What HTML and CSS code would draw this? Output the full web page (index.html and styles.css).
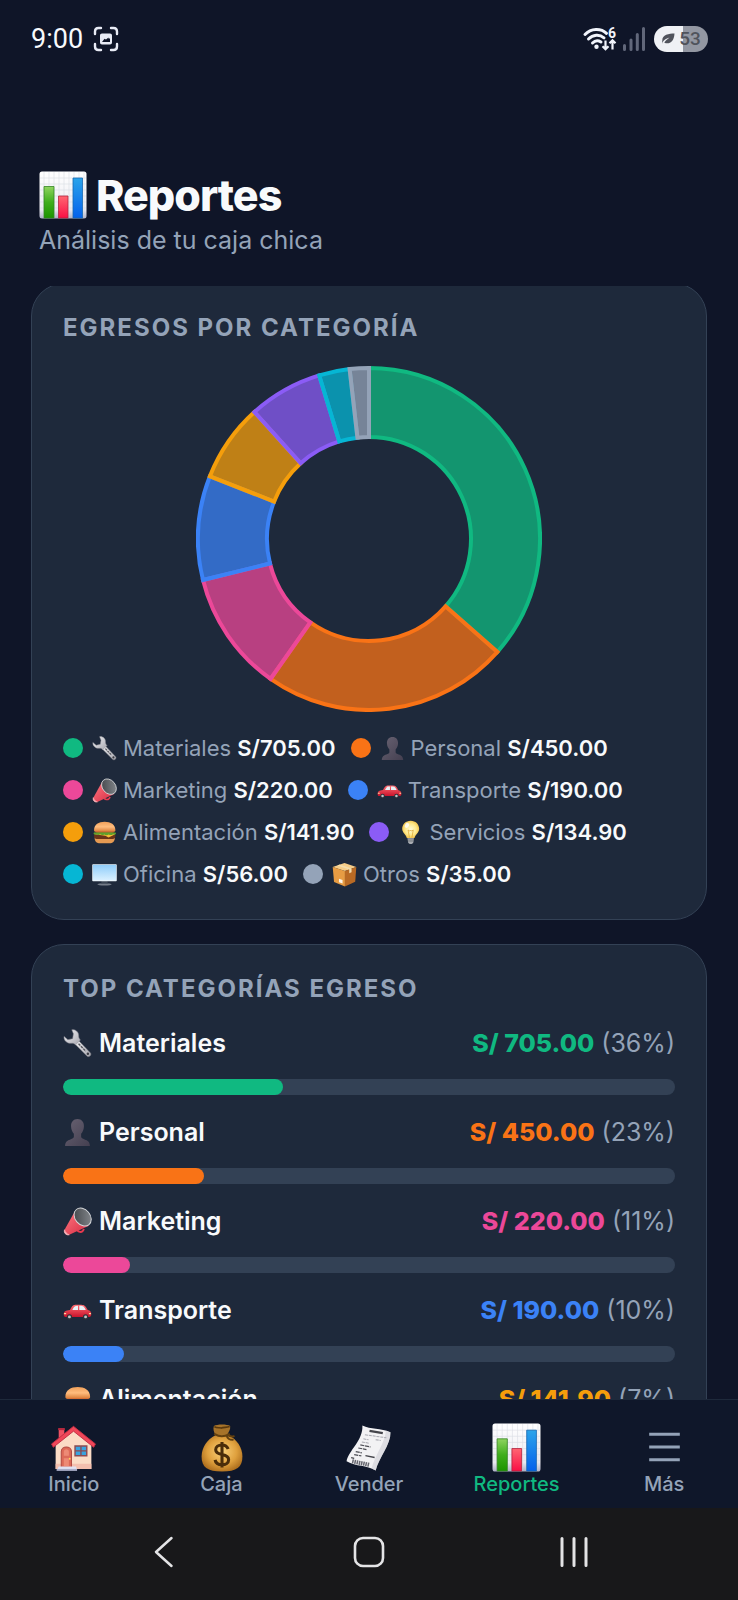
FILE: index.html
```html
<!DOCTYPE html>
<html lang="es">
<head>
<meta charset="utf-8">
<meta name="viewport" content="width=device-width, initial-scale=1">
<title>Reportes</title>
<link rel="stylesheet" href="styles.css">
</head>
<body>
<svg class="sprite" aria-hidden="true">
  <defs>
    <linearGradient id="g-green" x1="0" y1="0" x2="0" y2="1"><stop offset="0" stop-color="#8fd45f"/><stop offset=".5" stop-color="#3fae1c"/><stop offset="1" stop-color="#1c9400"/></linearGradient>
    <linearGradient id="g-red" x1="0" y1="0" x2="0" y2="1"><stop offset="0" stop-color="#ff6672"/><stop offset="1" stop-color="#f90f45"/></linearGradient>
    <linearGradient id="g-blue" x1="0" y1="0" x2="0" y2="1"><stop offset="0" stop-color="#2ba4ea"/><stop offset="1" stop-color="#0461ec"/></linearGradient>
    <linearGradient id="g-paper" x1="0" y1="0" x2="0" y2="1"><stop offset="0" stop-color="#fff"/><stop offset=".8" stop-color="#ececf2"/><stop offset="1" stop-color="#aeb0c6"/></linearGradient>
    <linearGradient id="g-metal" x1="0" y1="0" x2="1" y2="1"><stop offset="0" stop-color="#f2f2f4"/><stop offset=".6" stop-color="#c6c6cc"/><stop offset="1" stop-color="#a3a3ab"/></linearGradient>
    <linearGradient id="g-bust" x1="0" y1="0" x2="1" y2="1"><stop offset="0" stop-color="#686272"/><stop offset="1" stop-color="#443f50"/></linearGradient>
    <linearGradient id="g-horn" x1="0" y1="0" x2="1" y2="1"><stop offset="0" stop-color="#ff7780"/><stop offset="1" stop-color="#d52a42"/></linearGradient>
    <linearGradient id="g-mouth" x1="0" y1="0" x2="1" y2="1"><stop offset="0" stop-color="#3d4044"/><stop offset="1" stop-color="#8b8f94"/></linearGradient>
    <linearGradient id="g-car" x1="0" y1="0" x2="0" y2="1"><stop offset="0" stop-color="#ff6d73"/><stop offset="1" stop-color="#c9142c"/></linearGradient>
    <linearGradient id="g-bun" x1="0" y1="0" x2="0" y2="1"><stop offset="0" stop-color="#f0a05a"/><stop offset=".5" stop-color="#ffbd7e"/><stop offset="1" stop-color="#d97c35"/></linearGradient>
    <linearGradient id="g-screen" x1="0" y1="0" x2="0" y2="1"><stop offset="0" stop-color="#8fcdfa"/><stop offset="1" stop-color="#d9f0ff"/></linearGradient>
    <radialGradient id="g-bulb" cx=".5" cy=".5" r=".55"><stop offset="0" stop-color="#fffbd8"/><stop offset=".6" stop-color="#ffe98a"/><stop offset="1" stop-color="#f2bf45"/></radialGradient>
    <radialGradient id="g-bag" cx=".5" cy=".45" r=".6"><stop offset="0" stop-color="#fbd27a"/><stop offset=".6" stop-color="#dfa03d"/><stop offset="1" stop-color="#a96a1b"/></radialGradient>
  </defs>

  <symbol id="i-chart" viewBox="0 0 48 48">
    <rect x=".5" y=".5" width="47" height="47" rx="2.5" fill="url(#g-paper)"/>
    <path d="M5 1v46M10 1v46M15 1v46M20 1v46M25 1v46M30 1v46M35 1v46M40 1v46M45 1v46M1 7h46M1 13h46M1 19h46M1 25h46M1 31h46M1 37h46" stroke="#cfd3dc" stroke-width=".6" opacity=".7"/>
    <path d="M5 47V15.500h10V47z" fill="url(#g-green)" stroke="#338524" stroke-width=".8"/>
    <path d="M19.500 47V25h9.500v22z" fill="url(#g-red)" stroke="#b3243f" stroke-width=".8"/>
    <path d="M34 47V7h9.500v40z" fill="url(#g-blue)" stroke="#1667b0" stroke-width=".8"/>
  </symbol>

  <symbol id="i-wrench" viewBox="0 0 28 28">
    <path d="M14.500 10.500l12 12.600c1.500 1.800-1.300 4.600-3.200 3.200L11 14z" fill="url(#g-metal)" stroke="#77777f" stroke-width=".5"/>
    <path d="M8.500.8c3.300-.8 6.700 2 6.600 5.500-.1 1.900.5 3 1.700 4.300l-4.700 4.700c-1.300-1.400-2.500-1.700-4.300-1.500C4 14.200.4 10.800 1 7.200l3.700 3.100 4.600-1 .8-4.600z" fill="url(#g-metal)" stroke="#8b8b93" stroke-width=".5"/>
    <path d="M15 14.200l7 7.200" stroke="#55555c" stroke-width="1.300" stroke-dasharray="2.500 .8"/>
    <circle cx="24" cy="24" r="1.200" fill="#3b3b42"/>
  </symbol>

  <symbol id="i-bust" viewBox="0 0 28 28">
    <path d="M14 1c4 0 6.500 3 6.200 7.500-.2 3-1.300 5.200-2.700 6.700v3c0 1.200 1.300 1.800 3.400 2.500 3 1 4.800 2.200 5.100 6.300H2c.3-4.100 2.100-5.300 5.100-6.300 2.100-.7 3.400-1.300 3.400-2.500v-3C9.100 13.700 8 11.500 7.800 8.500 7.500 4 10 1 14 1z" fill="url(#g-bust)"/>
  </symbol>

  <symbol id="i-horn" viewBox="0 0 28 28">
    <path d="M13 20.500c.6 4 5.600 5.200 7.200.7" fill="none" stroke="#e8394f" stroke-width="1.800"/>
    <path d="M11.500 4L1.500 22c-1 2.800 1.400 5.600 4.500 4.800L25 18z" fill="url(#g-horn)"/>
    <path d="M1.500 22c.6 2.500 2.300 4.100 4.500 4.800-3.100.8-5.500-2-4.500-4.800z" fill="#f7c9cd" stroke="#f3a9b0" stroke-width=".8"/>
    <ellipse cx="19" cy="9.700" rx="7.300" ry="9.500" transform="rotate(-40 19 9.700)" fill="url(#g-mouth)" stroke="#d8dadd" stroke-width=".9"/>
  </symbol>

  <symbol id="i-car" viewBox="0 0 28 28">
    <path d="M.7 17.500c0-2.500 1.800-3.500 6-4 1.500-2.700 2.500-4.800 5-5 2.600-.3 6-.2 8 .3 1.700.5 2.800 2.500 4.200 4.800 2.600.6 3.400 1.600 3.400 4.100 0 1.600-.5 2.300-1.500 2.500H2.500c-1.300-.2-1.800-1.200-1.800-2.700z" fill="url(#g-car)"/>
    <path d="M9 13.500c1-2 2-3.700 3.300-3.900l2.200-.2v4.100zM15.700 9.400c1.200 0 2.500.1 3.500.4 1.200.4 2.100 2.100 2.800 3.700h-6.300z" fill="#e9f1f6"/>
    <path d="M1 17h2M25 17h2" stroke="#ffd9a0" stroke-width="1.200"/>
    <circle cx="6.200" cy="20.200" r="2.500" fill="#2f3238"/><circle cx="6.200" cy="20.200" r="1.400" fill="#bfc5cb"/>
    <circle cx="21.800" cy="20.200" r="2.500" fill="#2f3238"/><circle cx="21.800" cy="20.200" r="1.400" fill="#bfc5cb"/>
  </symbol>

  <symbol id="i-burger" viewBox="0 0 28 28">
    <path d="M3 19.500h22.500c.3 4.500-2.500 6.500-6 6.500H9c-3.700 0-6.300-2-6-6.500z" fill="#e69a52"/>
    <path d="M2.500 16.500h23.500c.8 2.500-.5 4.700-2.500 4.700H5c-2.300 0-3.300-2.500-2.500-4.700z" fill="#6b3419"/>
    <path d="M2.500 16c4-2 19-2 23.500 0l-4 2-3.500 1.600L15 17.500z" fill="#f7bd35"/>
    <path d="M1.800 14.500c1.500-1.700 23-1.700 25 0 .3 2-1.800 2.300-3.300 1.400-1.700 1.600-3.500 1-4.700.2-1.800 1.300-3.600 1-5 0-1.600 1.100-3.400 1-4.700-.1-1.600 1.200-3 .8-4.200 0-1.700.6-3.300.2-3.100-1.500z" fill="#5fa12c"/>
    <path d="M4 12.600h20.500v1.200H4z" fill="#d8442a"/>
    <path d="M2.300 11.500C2.300 5 7.500 2 14.200 2s12 3 12 9.500c0 1.200-.8 1.700-2 1.700H4.300c-1.200 0-2-.5-2-1.700z" fill="url(#g-bun)"/>
  </symbol>

  <symbol id="i-bulb" viewBox="0 0 28 28">
    <path d="M10.500 19h7.500l-.8 6c-.3 2.600-5.500 2.600-5.900 0z" fill="#a9acb2"/>
    <path d="M10.800 21.200h7M11 23.500h6.500" stroke="#62656c" stroke-width=".9"/>
    <path d="M14.200.8c5.500 0 9.500 4 9.500 9 0 4.500-4.200 6.200-5.200 10.300h-8.600c-1-4.100-5.200-5.800-5.200-10.300 0-5 4-9 9.500-9z" fill="url(#g-bulb)"/>
    <path d="M12.800 19.500l-1.500-8.300 1.900 1.200 1-1.200 1 1.200 1.900-1.200-1.500 8.300" fill="none" stroke="#d79a20" stroke-width=".7"/>
    <ellipse cx="10" cy="6" rx="2.200" ry="3" transform="rotate(35 10 6)" fill="#fff" opacity=".8"/>
  </symbol>

  <symbol id="i-screen" viewBox="0 0 28 28">
    <ellipse cx="14" cy="25" rx="8" ry="1.300" fill="#747c88"/>
    <path d="M11 20h6l.8 4.200h-7.600z" fill="#3b4654"/>
    <rect x=".3" y="2.500" width="27.400" height="19" rx=".8" fill="#eef6fb"/>
    <rect x="1" y="3.200" width="26" height="17.300" fill="url(#g-screen)"/>
  </symbol>

  <symbol id="i-box" viewBox="0 0 28 28">
    <path d="M.8 5.500L14 1l13.200 4.500L14.500 10z" fill="#f7cd88"/>
    <path d="M.8 5.500L14.500 10v17.300L2.300 22.500z" fill="#e79c43"/>
    <path d="M27.200 5.500L14.500 10v17.300L26 22z" fill="#b96a24"/>
    <path d="M5.800 3.800L19.300 8.300v4.200l2.600-1V7.400L8.500 2.900z" fill="#f3dcae"/>
    <path d="M7.800 18.700l4 1.500v4l-4-1.500z" fill="#fff5e6"/>
  </symbol>

  <symbol id="i-house" viewBox="0 0 48 48">
    <path d="M9.500 5.500H15V17l-5.500 5z" fill="#ee5162"/><path d="M9 5h6.500v2H9z" fill="#b7283d"/>
    <path d="M6.500 19.500L24 4.500l17.500 15V45h-35z" fill="#fbdcc6"/>
    <path d="M6.500 40h35v5h-35z" fill="#f4bfae"/>
    <path d="M24 3.300L2.500 20.500l1.700 3.300L24 8l19.800 15.800 1.700-3.300z" fill="#f04759" stroke="#c22d43" stroke-width=".9" stroke-linejoin="round"/>
    <path d="M12 45V28c0-6 10-6 10 0v17z" fill="#dd6a58" stroke="#b24a42" stroke-width="1"/>
    <path d="M14.500 32v-3.500c0-3.600 5-3.600 5 0V32zM14.500 34.500h5V42h-5z" fill="#ed8a75"/>
    <circle cx="20.300" cy="35" r=".9" fill="#ffd25d"/>
    <path d="M25.500 22.500h11.500v9.500h-11.500z" fill="#38a3df" stroke="#8b4b52" stroke-width="1.400"/>
    <path d="M31.300 22.500v9.500M25.500 27.300h11.500" stroke="#8b4b52" stroke-width="1.300"/>
    <path d="M9.500 42.500h17l1 4h-20z" fill="#dfe2f3"/><path d="M7.500 45h20v1.700h-20z" fill="#a9adc9"/>
  </symbol>

  <symbol id="i-bag" viewBox="0 0 48 48">
    <path d="M18.500 12.500c-2-3-3-6.500-2-9.500 3-2 13-2 16 0 .5 3-1.500 6.500-3.500 9.500z" fill="#a77329"/>
    <path d="M17 3.500c3 2 5 .5 7 1.500 2-1 5-.3 8-1.500" fill="none" stroke="#5a380d" stroke-width="1.600"/>
    <path d="M18 12c-8 4-13.500 12-13.500 21C4.500 43 10 47.500 24.500 47.500S44.500 43 44.500 33c0-9-5.500-17-13.500-21z" fill="url(#g-bag)"/>
    <path d="M17.500 11c4 2.500 9.500 2.500 14 0M29 12c1 4 3 4.500 6 4.500M30 11.500c2 1.800 4 2 6 1.500" fill="none" stroke="#63400f" stroke-width="2" stroke-linecap="round"/>
    <path d="M30.500 25.500c-1-3-3.400-4-6.200-4-3.300 0-6 1.800-6 4.700 0 3.200 3 4 6.200 4.700s6.500 1.700 6.500 5-3 5-6.500 5-6.200-1.500-6.800-4.800M24.500 18.500v25" fill="none" stroke="#4a2d0a" stroke-width="3"/>
  </symbol>

  <symbol id="i-receipt" viewBox="0 0 48 48">
    <path d="M18 2.500c8 4 18 2.500 27.500 6.500.5 12-11.500 25-14.500 37.500C22 41 12 43 2.500 37.500 4.500 27 19 17 18 2.500z" fill="#f2f2f4"/>
    <path d="M45.500 9c.5 12-11.500 25-14.500 37.500l-4-2C30 32 40 20 41 7.800z" fill="#cfcfd5" opacity=".6"/>
    <path d="M25 7.800l13 2.200" stroke="#44454b" stroke-width="2.200"/>
    <path d="M20.500 11.500l21 3M19 15.500l5 1M17.500 18.500l7 1.300M31 16.300l5 .8" stroke="#a9aab2" stroke-width="1" stroke-dasharray="3 .8"/>
    <path d="M16 21.500l10 2M14 24.500l8 1.500M11.500 28l6 1.300M10 31l7 1.300" stroke="#4e4f56" stroke-width="1.200" stroke-dasharray="4 .7"/>
    <path d="M21 32l9 1.800M7 34l3 .6" stroke="#44454b" stroke-width="1.300"/>
    <path d="M8 37.500l17 3.500" stroke="#66676f" stroke-width="4" stroke-dasharray="1.500 .7"/>
  </symbol>
</svg>

<div class="screen">
  <div class="status">
    <div class="status-side">
      <time class="clock">9:00</time>
      <svg class="capture" viewBox="0 0 24 24" aria-hidden="true">
        <path d="M1 7V4.500C1 2.500 2.500 1 4.500 1H7M17 1h2.500C21.500 1 23 2.500 23 4.500V7M23 17v2.500c0 2-1.500 3.500-3.500 3.500H17M7 23H4.500C2.500 23 1 21.500 1 19.500V17" fill="none" stroke="currentColor" stroke-width="2.400" stroke-linecap="round"/>
        <path fill-rule="evenodd" d="M8 6.500h8c1.200 0 2 .8 2 2v7c0 1.200-.8 2-2 2H8c-1.200 0-2-.8-2-2v-7c0-1.200.8-2 2-2zM8 15h8v-3.500h-1.500V10.500l-2.500 2-1.500-.7z" fill="currentColor"/>
      </svg>
    </div>
    <div class="status-side">
      <svg class="wifi" viewBox="0 0 34 24" role="img" aria-label="Wi-Fi 6">
        <g fill="none" stroke="currentColor" stroke-width="3" stroke-linecap="round">
          <path d="M2 7.500c6-6.500 16-6.500 21.500-1.200M5.500 12c4.500-4.500 11-4.800 15.500-1.200M9.500 16c2.500-2.500 5.500-2.800 8.500-1"/>
        </g>
        <circle cx="13.500" cy="19.800" r="2.200" fill="currentColor"/>
        <path d="M22.500 13.500v9M19.500 19.300l3 3 3-3M29.500 22.500v-9M26.500 16.200l3-3 3 3" fill="none" stroke="currentColor" stroke-width="2.200"/>
        <text class="wifi-gen" x="25" y="11">6</text>
      </svg>
      <svg class="signal" viewBox="0 0 22 24" aria-hidden="true"><path d="M1.500 22.500v-4M8 22.500v-9.500M14.300 22.500V7.500M20.500 22.500v-21" stroke="currentColor" stroke-width="3" stroke-linecap="round"/></svg>
      <div class="battery">
        <svg class="leaf" viewBox="0 0 14 12" aria-hidden="true"><path d="M1 11c1-4 4-5.500 7.500-6.500C6 6.500 4 8 3.300 9.700 8 11.500 13 9.500 13.500.5 8 .5 1 1.500 1.300 7.500z" fill="currentColor"/></svg>
        <span>53</span>
      </div>
    </div>
  </div>

  <header class="header">
    <h1><svg class="title-icon" aria-hidden="true"><use href="#i-chart"/></svg>Reportes</h1>
    <p>Análisis de tu caja chica</p>
  </header>

  <main class="content">
    <section class="card">
      <h2>EGRESOS POR CATEGORÍA</h2>
      <svg class="donut" id="donut" viewBox="-173 -173 346 346" role="img" aria-label="Egresos por categoría"></svg>
      <ul class="legend">
        <li><i class="dot c-green"></i><svg class="emoji-s"><use href="#i-wrench"/></svg><span>Materiales <b>S/705.00</b></span></li>
        <li><i class="dot c-orange"></i><svg class="emoji-s"><use href="#i-bust"/></svg><span>Personal <b>S/450.00</b></span></li>
        <li><i class="dot c-pink"></i><svg class="emoji-s"><use href="#i-horn"/></svg><span>Marketing <b>S/220.00</b></span></li>
        <li><i class="dot c-blue"></i><svg class="emoji-s"><use href="#i-car"/></svg><span>Transporte <b>S/190.00</b></span></li>
        <li><i class="dot c-amber"></i><svg class="emoji-s"><use href="#i-burger"/></svg><span>Alimentación <b>S/141.90</b></span></li>
        <li><i class="dot c-violet"></i><svg class="emoji-s"><use href="#i-bulb"/></svg><span>Servicios <b>S/134.90</b></span></li>
        <li><i class="dot c-cyan"></i><svg class="emoji-s"><use href="#i-screen"/></svg><span>Oficina <b>S/56.00</b></span></li>
        <li><i class="dot c-gray"></i><svg class="emoji-s"><use href="#i-box"/></svg><span>Otros <b>S/35.00</b></span></li>
      </ul>
    </section>

    <section class="card">
      <h2>TOP CATEGORÍAS EGRESO</h2>
      <ul class="top">
        <li>
          <div class="row"><span class="name"><svg class="emoji-m"><use href="#i-wrench"/></svg>Materiales</span><span class="share"><b class="t-green">S/ 705.00</b> (36%)</span></div>
          <div class="track"><div class="fill c-green" style="width:36%"></div></div>
        </li>
        <li>
          <div class="row"><span class="name"><svg class="emoji-m"><use href="#i-bust"/></svg>Personal</span><span class="share"><b class="t-orange">S/ 450.00</b> (23%)</span></div>
          <div class="track"><div class="fill c-orange" style="width:23%"></div></div>
        </li>
        <li>
          <div class="row"><span class="name"><svg class="emoji-m"><use href="#i-horn"/></svg>Marketing</span><span class="share"><b class="t-pink">S/ 220.00</b> (11%)</span></div>
          <div class="track"><div class="fill c-pink" style="width:11%"></div></div>
        </li>
        <li>
          <div class="row"><span class="name"><svg class="emoji-m"><use href="#i-car"/></svg>Transporte</span><span class="share"><b class="t-blue">S/ 190.00</b> (10%)</span></div>
          <div class="track"><div class="fill c-blue" style="width:10%"></div></div>
        </li>
        <li>
          <div class="row"><span class="name"><svg class="emoji-m"><use href="#i-burger"/></svg>Alimentación</span><span class="share"><b class="t-amber">S/ 141.90</b> (7%)</span></div>
          <div class="track"><div class="fill c-amber" style="width:7%"></div></div>
        </li>
      </ul>
    </section>
  </main>

  <nav class="tabs" aria-label="Principal">
    <a href="#inicio"><svg class="tab-icon"><use href="#i-house"/></svg>Inicio</a>
    <a href="#caja"><svg class="tab-icon"><use href="#i-bag"/></svg>Caja</a>
    <a href="#vender"><svg class="tab-icon"><use href="#i-receipt"/></svg>Vender</a>
    <a href="#reportes" class="active" aria-current="page"><svg class="tab-icon"><use href="#i-chart"/></svg>Reportes</a>
    <a href="#mas"><svg class="tab-icon" viewBox="0 0 48 48"><path d="M9 11h30M9 23.500h30M9 36h30" stroke="currentColor" stroke-width="3"/></svg>Más</a>
  </nav>

  <div class="system">
    <button type="button" aria-label="Atrás"><svg viewBox="0 0 32 32"><path d="M23.500 2L8 16l15.500 14" fill="none" stroke="currentColor" stroke-width="2.500" stroke-linejoin="round" stroke-linecap="round"/></svg></button>
    <button type="button" aria-label="Inicio del sistema"><svg viewBox="0 0 32 32"><rect x="2" y="2" width="28" height="28" rx="8" fill="none" stroke="currentColor" stroke-width="2.600"/></svg></button>
    <button type="button" aria-label="Recientes"><svg viewBox="0 0 32 32"><path d="M4 2.500v27M16 2.500v27M28 2.500v27" stroke="currentColor" stroke-width="3" stroke-linecap="round"/></svg></button>
  </div>
</div>
<script src="script.js"></script>
</body>
</html>
```

FILE: styles.css
```css
*, *::before, *::after { box-sizing: border-box; }

body {
  margin: 0;
  background: #0f1528;
  color: #f8fafc;
  font-family: Inter, Roboto, "Liberation Sans", sans-serif;
}

h1, h2, p, ul { margin: 0; padding: 0; }
ul { list-style: none; }
svg { display: block; flex: none; }
.sprite { position: absolute; width: 0; height: 0; }

.screen { display: flex; flex-direction: column; height: 100vh; overflow: hidden; }

/* Phone status bar */
.status {
  display: flex;
  justify-content: space-between;
  align-items: center;
  height: 78px;
  padding: 0 30px 0 31px;
  flex: none;
}
.status-side { display: flex; align-items: center; }
.clock { font: 400 27px/32px Roboto, sans-serif; }
.capture { width: 24px; height: 24px; margin-left: 11px; color: #e8ebf5; overflow: visible; }
.wifi { width: 34px; height: 24px; margin-right: 6px; color: #f1f4fb; overflow: visible; }
.wifi-gen { font: 700 14px Roboto, sans-serif; fill: currentColor; }
.signal { width: 22px; height: 24px; margin-right: 9px; color: #61677a; }
.battery {
  display: flex;
  align-items: center;
  justify-content: center;
  gap: 4px;
  width: 54px;
  height: 26px;
  border-radius: 13px;
  background: linear-gradient(90deg, #eff1f5 53%, #9397a2 53%);
  color: #50535c;
  font: 500 19px/26px Roboto, sans-serif;
}
.leaf { width: 14px; height: 12px; }

.header { flex: none; padding: 92px 39px 31px; }
h1 { display: flex; align-items: center; gap: 9px; font-size: 43px; line-height: 50px; font-weight: 800; letter-spacing: -1px; }
.title-icon { width: 48px; height: 48px; }
.header p { margin-top: 5px; font-size: 25px; line-height: 30px; color: #94a3b8; }

/* Scrolled list of cards */
.content { flex: 1; min-height: 0; overflow: hidden; padding: 0 31px; }
.card {
  background: #1e293b;
  border: 1px solid #334155;
  border-radius: 33px;
  padding: 29px 31px 31px;
}
.card:first-child { margin-top: -3px; }
.card + .card { margin-top: 24px; }
h2 { font-size: 24px; line-height: 30px; font-weight: 700; letter-spacing: 2px; color: #94a3b8; }

.donut { width: 346px; max-width: 100%; margin: 23px auto 22px; }

.legend { display: flex; flex-wrap: wrap; gap: 14px 15px; }
.legend li { display: flex; align-items: center; font-size: 22px; line-height: 28px; color: #94a3b8; }
.legend b { font-weight: 600; color: #f8fafc; }
.dot { width: 20px; height: 20px; border-radius: 50%; margin-right: 9px; }
.emoji-s { width: 25px; height: 25px; margin-right: 6px; }

.top { display: grid; gap: 21px; margin-top: 23px; }
.row { display: flex; justify-content: space-between; font-size: 25px; line-height: 32px; }
.name { display: flex; align-items: center; gap: 7px; font-weight: 600; }
.share { color: #94a3b8; }
.share b { font-weight: 800; }
.emoji-m { width: 29px; height: 29px; }
.track { height: 16px; margin-top: 20px; border-radius: 8px; background: #334155; overflow: hidden; }
.fill { height: 100%; border-radius: 8px; }

.c-green { background: #10b981; } .t-green { color: #10b981; }
.c-orange { background: #f97316; } .t-orange { color: #f97316; }
.c-pink { background: #ec4899; } .t-pink { color: #ec4899; }
.c-blue { background: #3b82f6; } .t-blue { color: #3b82f6; }
.c-amber { background: #f59e0b; } .t-amber { color: #f59e0b; }
.c-violet { background: #8b5cf6; }
.c-cyan { background: #06b6d4; }
.c-gray { background: #94a3b8; }

/* App tab bar */
.tabs {
  display: grid;
  grid-template-columns: repeat(5, 1fr);
  flex: none;
  padding: 23px 0 12px;
  border-top: 1px solid #1e293b;
  background: #0f172a;
}
.tabs a {
  display: flex;
  flex-direction: column;
  align-items: center;
  color: #94a3b8;
  font-size: 20px;
  line-height: 24px;
  font-weight: 500;
  text-decoration: none;
}
.tabs .active { color: #10b981; }
.tab-icon { width: 49px; height: 49px; }

/* Phone navigation bar */
.system { display: flex; justify-content: space-between; align-items: center; flex: none; height: 92px; padding: 0 19% 5px; background: #18181a; }
.system button { padding: 8px; border: 0; background: none; color: #e4e4e6; }
.system svg { width: 32px; height: 32px; }
```

FILE: script.js
```js
const slices = [
  [705, '#10b981'],
  [450, '#f97316'],
  [220, '#ec4899'],
  [190, '#3b82f6'],
  [141.9, '#f59e0b'],
  [134.9, '#8b5cf6'],
  [56, '#06b6d4'],
  [35, '#94a3b8']
];
const OUTER = 171;
const INNER = 102;
const total = slices.reduce((sum, slice) => sum + slice[0], 0);
const point = (radius, angle) =>
  (radius * Math.sin(angle)).toFixed(2) + ' ' + (-radius * Math.cos(angle)).toFixed(2);

let start = 0;
for (const [value, color] of slices) {
  const end = start + (value / total) * Math.PI * 2;
  const large = end - start > Math.PI ? 1 : 0;
  const path = document.createElementNS('http://www.w3.org/2000/svg', 'path');
  path.setAttribute('d',
    `M${point(OUTER, start)}A${OUTER} ${OUTER} 0 ${large} 1 ${point(OUTER, end)}` +
    `L${point(INNER, end)}A${INNER} ${INNER} 0 ${large} 0 ${point(INNER, start)}Z`);
  path.setAttribute('fill', color);
  path.setAttribute('fill-opacity', '0.75');
  path.setAttribute('stroke', color);
  path.setAttribute('stroke-width', '4');
  document.getElementById('donut').append(path);
  start = end;
}
```
